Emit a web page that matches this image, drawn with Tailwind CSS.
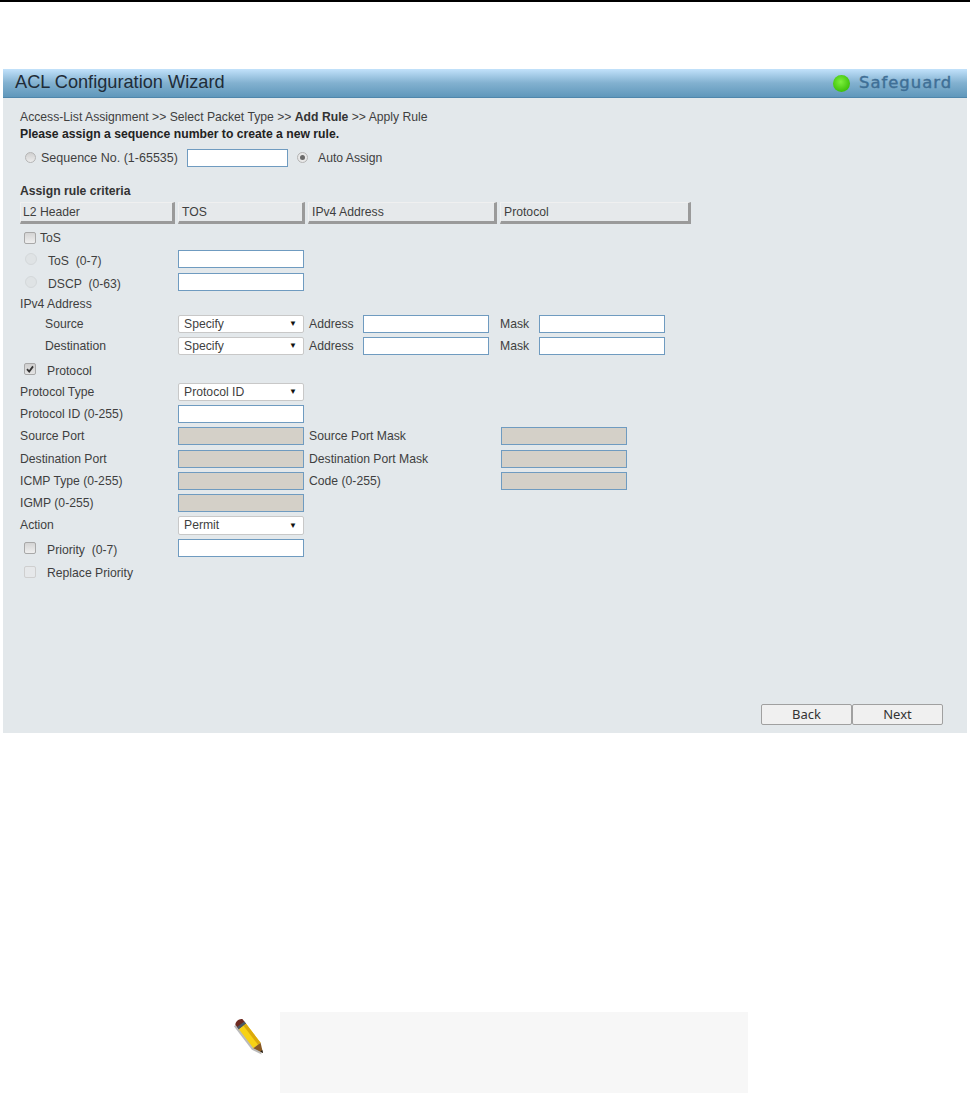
<!DOCTYPE html>
<html lang="en">
  <head>
    <meta charset="UTF-8" />
    <script src="https://cdn.jsdelivr.net/npm/@tailwindcss/browser@4"></script>
    <title>ACL Configuration Wizard</title>
  </head>
  <body class="w-[970px] h-[1093px] overflow-hidden bg-white font-['Liberation_Sans',Arial,sans-serif] text-[12.2px] text-[#3f3f3f]">
    <div class="h-[2px] bg-black"></div>

    <!-- Panel -->
    <div class="mt-[67px] ml-[3px] w-[964px] h-[664px] flex flex-col bg-[#e3e8eb]">
      <div class="h-[29px] flex items-center justify-between pl-[12px] pr-[16px] bg-gradient-to-b from-[#c2e2fb] via-[#82b1d0] to-[#5f97bb] border-b border-[#4f86ab]">
        <span class="mb-[1px] text-[18.2px] text-[#1f2c38]">ACL Configuration Wizard</span>
        <div class="flex items-center gap-[9px]">
          <span class="w-[17px] h-[17px] rounded-full bg-[radial-gradient(circle_at_45%_40%,#7df03c,#3fc20c_70%,#5fa83a)]"></span>
          <span class="w-[92px] origin-left scale-x-[1.095] font-['DejaVu_Sans',sans-serif] text-[15px] tracking-[0.9px] whitespace-nowrap text-[#3f6f96] [-webkit-text-stroke:0.4px_#3f6f96]">Safeguard</span>
        </div>
      </div>

      <div class="flex-1 flex flex-col pl-[17px]">
        <p class="mt-[11px] h-[16px] leading-[16px]">Access-List Assignment &gt;&gt; Select Packet Type &gt;&gt; <b class="text-[#333]">Add Rule</b> &gt;&gt; Apply Rule</p>
        <p class="mt-[1px] h-[16px] leading-[16px] font-bold text-[#222]">Please assign a sequence number to create a new rule.</p>

        <div class="mt-[6px] h-[20px] flex items-center">
          <span class="mb-[2px] ml-[5px] w-[11px] h-[11px] rounded-full border border-[#b5b5b5] bg-gradient-to-b from-[#d0d0d0] to-[#ececec]"></span>
          <span class="ml-[5px] w-[146px] text-[12.5px]">Sequence No. (1-65535)</span>
          <span class="w-[101px] h-[18px] bg-white border border-[#6f9bc0]"></span>
          <span class="mb-[2px] ml-[9px] w-[11px] h-[11px] rounded-full border border-[#b5b5b5] bg-[#e8e8e8] flex items-center justify-center"><span class="w-[5px] h-[5px] rounded-full bg-[#6a6a6a]"></span></span>
          <span class="ml-[10px]">Auto Assign</span>
        </div>

        <p class="mt-[15px] h-[16px] leading-[16px] font-bold text-[#333]">Assign rule criteria</p>

        <!-- Tabs -->
        <div class="mt-[3px] h-[22px] flex gap-[3px]">
          <div class="w-[155px] pl-[2px] flex items-center bg-[#e6e9eb] border-t border-l border-[#f0f0f0] border-r-[3px] border-b-[3px] border-r-[#9a9a9a] border-b-[#9a9a9a]">L2 Header</div>
          <div class="w-[127px] pl-[3px] flex items-center bg-[#e6e9eb] border-t border-l border-[#f0f0f0] border-r-[3px] border-b-[3px] border-r-[#9a9a9a] border-b-[#9a9a9a]">TOS</div>
          <div class="w-[189px] pl-[3px] flex items-center bg-[#e6e9eb] border-t border-l border-[#f0f0f0] border-r-[3px] border-b-[3px] border-r-[#9a9a9a] border-b-[#9a9a9a]">IPv4 Address</div>
          <div class="w-[191px] pl-[3px] flex items-center bg-[#e6e9eb] border-t border-l border-[#f0f0f0] border-r-[3px] border-b-[3px] border-r-[#9a9a9a] border-b-[#9a9a9a]">Protocol</div>
        </div>

        <div class="mt-[5px] h-[18px] flex items-center">
          <span class="ml-[4px] w-[12px] h-[12px] rounded-[2px] border border-[#a8a8a8] bg-gradient-to-b from-[#d4d4d4] to-[#efefef]"></span>
          <span class="ml-[4px]">ToS</span>
        </div>
        <div class="mt-[3px] h-[18px] flex items-center">
          <span class="ml-[5px] w-[12px] h-[12px] rounded-full border border-[#d4d8da] bg-[#dfe3e5]"></span>
          <span class="ml-[11px] w-[130px] pt-[4px] whitespace-pre">ToS  (0-7)</span>
          <span class="w-[126px] h-[18px] bg-white border border-[#6f9bc0]"></span>
        </div>
        <div class="mt-[5px] h-[18px] flex items-center">
          <span class="ml-[5px] w-[12px] h-[12px] rounded-full border border-[#d4d8da] bg-[#dfe3e5]"></span>
          <span class="ml-[11px] w-[130px] pt-[4px] whitespace-pre">DSCP  (0-63)</span>
          <span class="w-[126px] h-[18px] bg-white border border-[#6f9bc0]"></span>
        </div>
        <div class="mt-[5px] h-[16px] leading-[16px]">IPv4 Address</div>

        <div class="mt-[3px] h-[18px] flex items-center">
          <span class="pl-[25px] w-[158px]">Source</span>
          <div class="w-[126px] h-[18px] pl-[5px] pr-[6px] flex items-center justify-between bg-white border border-[#c8c8c8] rounded-[2px]"><span>Specify</span><span class="text-[8px] text-[#111]">▼</span></div>
          <span class="ml-[5px] w-[54px]">Address</span>
          <span class="w-[126px] h-[18px] bg-white border border-[#6f9bc0]"></span>
          <span class="ml-[11px] w-[39px]">Mask</span>
          <span class="w-[126px] h-[18px] bg-white border border-[#6f9bc0]"></span>
        </div>
        <div class="mt-[4px] h-[18px] flex items-center">
          <span class="pl-[25px] w-[158px]">Destination</span>
          <div class="w-[126px] h-[18px] pl-[5px] pr-[6px] flex items-center justify-between bg-white border border-[#c8c8c8] rounded-[2px]"><span>Specify</span><span class="text-[8px] text-[#111]">▼</span></div>
          <span class="ml-[5px] w-[54px]">Address</span>
          <span class="w-[126px] h-[18px] bg-white border border-[#6f9bc0]"></span>
          <span class="ml-[11px] w-[39px]">Mask</span>
          <span class="w-[126px] h-[18px] bg-white border border-[#6f9bc0]"></span>
        </div>

        <div class="mt-[6px] h-[18px] flex items-center">
          <span class="mb-[2px] ml-[4px] w-[12px] h-[12px] rounded-[2px] border border-[#a8a8a8] bg-gradient-to-b from-[#cfcfcf] to-[#e4e4e4] flex items-center justify-center">
            <svg width="10" height="10" viewBox="0 0 10 10" fill="none"><path d="M2 5.2 4.2 7.6 8 2.4" stroke="#333" stroke-width="1.8"/></svg>
          </span>
          <span class="ml-[11px] pt-[2px]">Protocol</span>
        </div>
        <div class="mt-[4px] h-[18px] flex items-center">
          <span class="w-[158px]">Protocol Type</span>
          <div class="w-[126px] h-[18px] pl-[5px] pr-[6px] flex items-center justify-between bg-white border border-[#c8c8c8] rounded-[2px]"><span>Protocol ID</span><span class="text-[8px] text-[#111]">▼</span></div>
        </div>
        <div class="mt-[4px] h-[18px] flex items-center">
          <span class="w-[158px]">Protocol ID (0-255)</span>
          <span class="w-[126px] h-[18px] bg-white border border-[#6f9bc0]"></span>
        </div>
        <div class="mt-[4px] h-[18px] flex items-center">
          <span class="w-[158px]">Source Port</span>
          <span class="w-[126px] h-[18px] bg-[#d4d0c8] border border-[#6f9bc0]"></span>
          <span class="ml-[5px] w-[192px]">Source Port Mask</span>
          <span class="w-[126px] h-[18px] bg-[#d4d0c8] border border-[#6f9bc0]"></span>
        </div>
        <div class="mt-[5px] h-[18px] flex items-center">
          <span class="w-[158px]">Destination Port</span>
          <span class="w-[126px] h-[18px] bg-[#d4d0c8] border border-[#6f9bc0]"></span>
          <span class="ml-[5px] w-[192px]">Destination Port Mask</span>
          <span class="w-[126px] h-[18px] bg-[#d4d0c8] border border-[#6f9bc0]"></span>
        </div>
        <div class="mt-[4px] h-[18px] flex items-center">
          <span class="w-[158px]">ICMP Type (0-255)</span>
          <span class="w-[126px] h-[18px] bg-[#d4d0c8] border border-[#6f9bc0]"></span>
          <span class="ml-[5px] w-[192px]">Code (0-255)</span>
          <span class="w-[126px] h-[18px] bg-[#d4d0c8] border border-[#6f9bc0]"></span>
        </div>
        <div class="mt-[4px] h-[18px] flex items-center">
          <span class="w-[158px]">IGMP (0-255)</span>
          <span class="w-[126px] h-[18px] bg-[#d4d0c8] border border-[#6f9bc0]"></span>
        </div>
        <div class="mt-[4px] h-[19px] flex items-center">
          <span class="w-[158px]">Action</span>
          <div class="w-[126px] h-[19px] pl-[5px] pr-[6px] flex items-center justify-between bg-white border border-[#c8c8c8] rounded-[2px]"><span>Permit</span><span class="text-[8px] text-[#111]">▼</span></div>
        </div>
        <div class="mt-[4px] h-[18px] flex items-center">
          <span class="ml-[4px] w-[12px] h-[12px] rounded-[2px] border border-[#a8a8a8] bg-gradient-to-b from-[#d4d4d4] to-[#efefef]"></span>
          <span class="ml-[11px] w-[131px] pt-[4px] whitespace-pre">Priority  (0-7)</span>
          <span class="w-[126px] h-[18px] bg-white border border-[#6f9bc0]"></span>
        </div>
        <div class="mt-[6px] h-[18px] flex items-center">
          <span class="ml-[4px] w-[12px] h-[12px] rounded-[2px] border border-[#cfcfcf] bg-[#e6e8ea]"></span>
          <span class="ml-[11px] pt-[2px]">Replace Priority</span>
        </div>

        <div class="mt-auto mb-[8px] pr-[24px] flex justify-end">
          <div class="w-[91px] h-[21px] flex items-center justify-center text-[13px] font-['Noto_Sans',sans-serif] text-[#333] bg-[#f0f0f0] border border-[#a0a0a0] rounded-[2px]">Back</div>
          <div class="w-[91px] h-[21px] flex items-center justify-center text-[13px] font-['Noto_Sans',sans-serif] text-[#333] bg-[#f0f0f0] border border-[#a0a0a0] rounded-[2px]">Next</div>
        </div>
      </div>
    </div>

    <!-- Note -->
    <div class="mt-[279px] flex">
      <svg class="ml-[232px] mt-[4px]" width="36" height="40" viewBox="0 0 36 40">
        <path d="M3.4 8.7 10.6 3.3 28.6 26.8 31 37 21.4 32.2Z" fill="#777" opacity="0.5" transform="translate(-1.5 1.5)"/>
        <path d="M3.4 8.7C3 5.500 8 2 10.600 3.300L14.100 7.800 6.900 13.200Z" fill="#6e2a20"/>
        <path d="M5.200 11 12.400 5.600 14.100 7.800 6.900 13.200Z" fill="#4a5a68"/>
        <path d="M6.900 13.200 14.100 7.800 28.600 26.800 21.400 32.200Z" fill="#f7d214"/>
        <path d="M11.500 9.800 14.100 7.800 28.600 26.800 26 28.800Z" fill="#dba90c"/>
        <path d="M21.400 32.200 28.600 26.800 31 37Z" fill="#8a5a22"/>
        <path d="M28.300 35.700 30.300 34 31 37Z" fill="#1c1c1c"/>
      </svg>
      <div class="ml-[12px] w-[468px] h-[81px] bg-[#f7f7f7]"></div>
    </div>
  </body>
</html>
